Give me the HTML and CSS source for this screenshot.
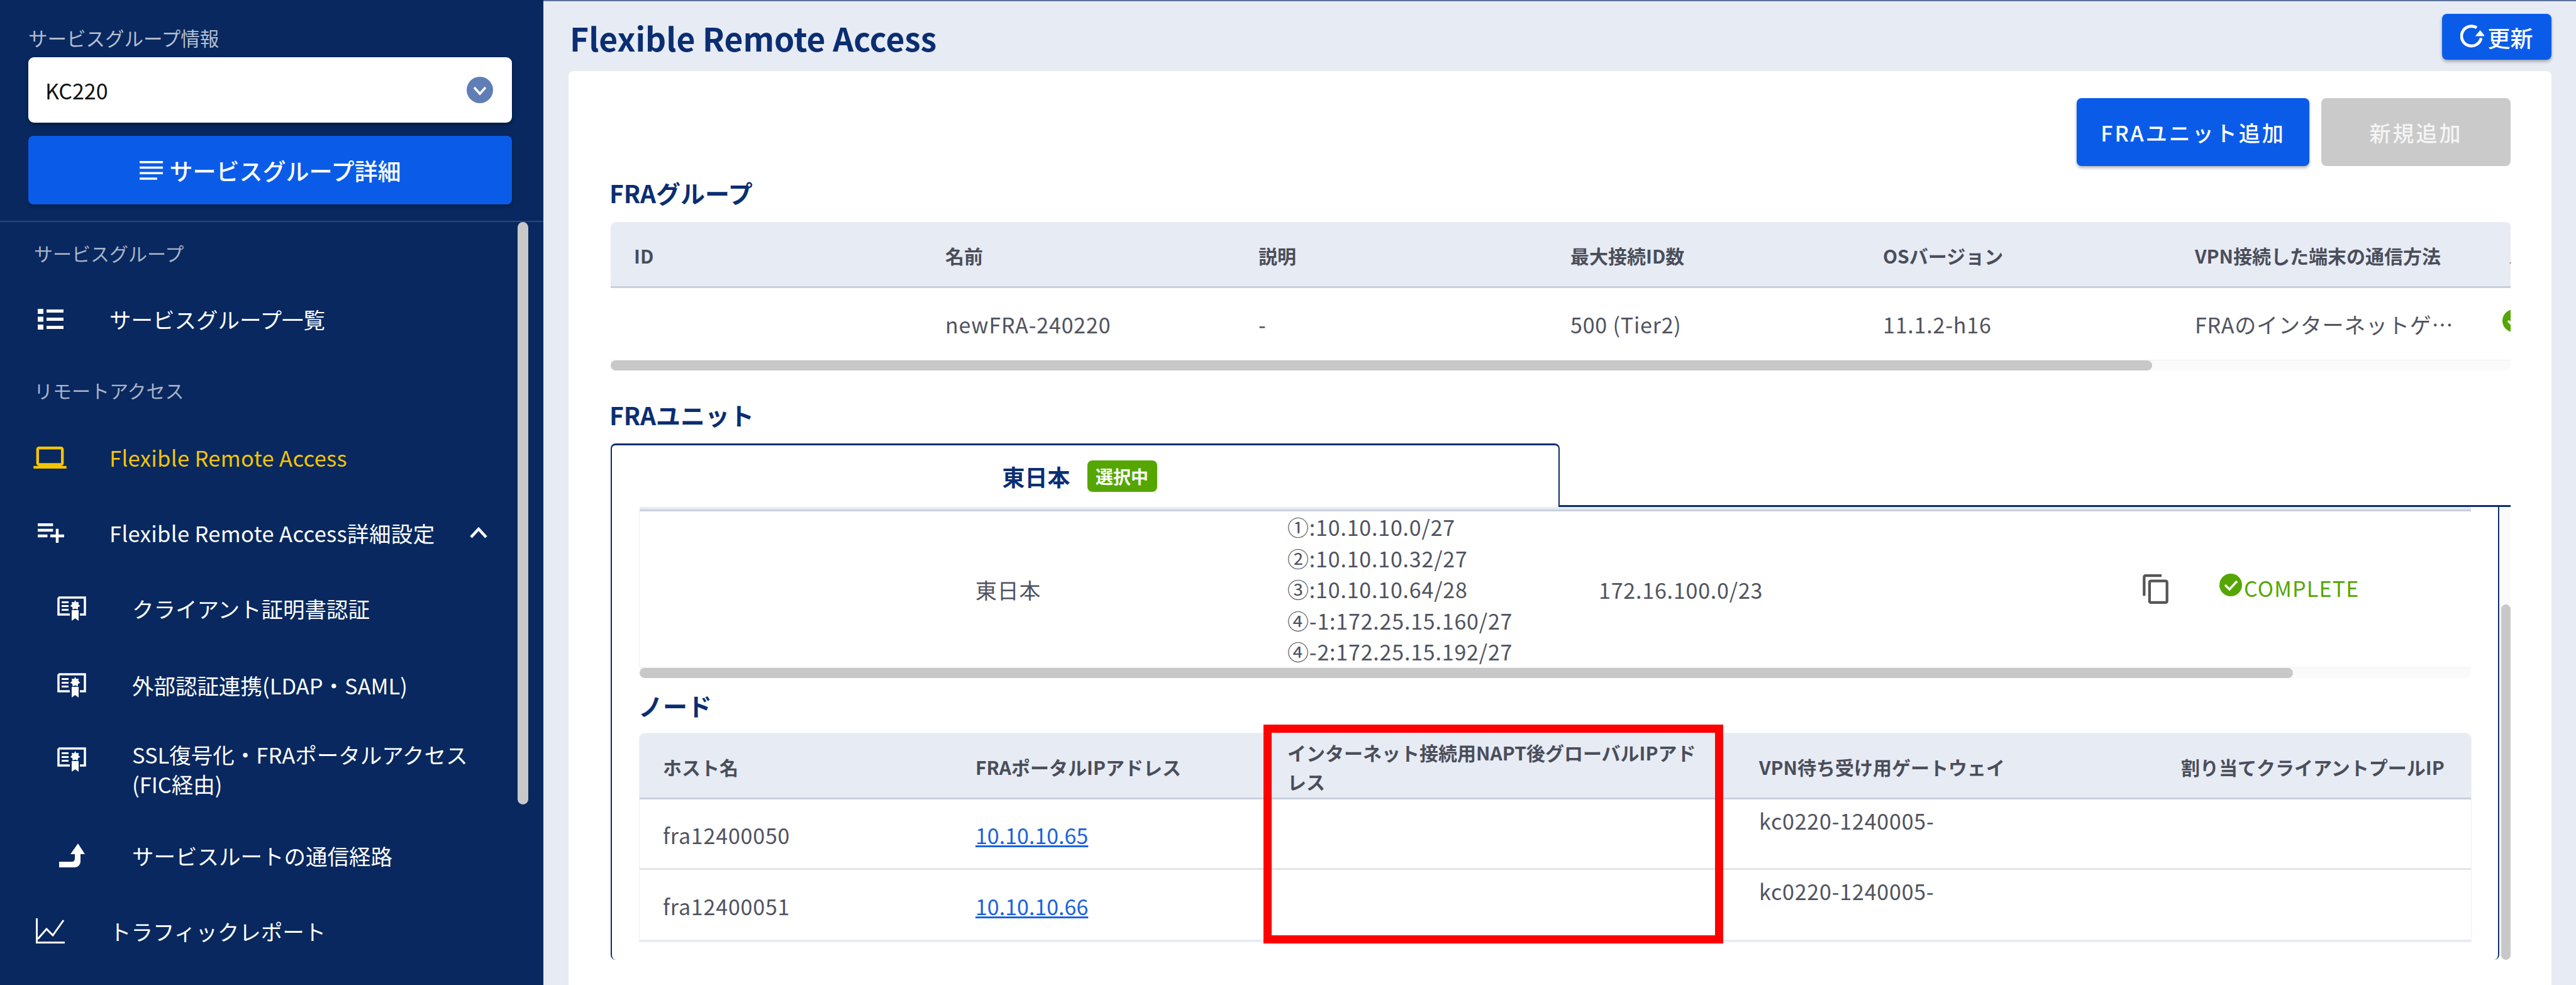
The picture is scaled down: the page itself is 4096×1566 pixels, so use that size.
FILE: index.html
```html
<!DOCTYPE html>
<html lang="ja">
<head>
<meta charset="utf-8">
<title>Flexible Remote Access</title>
<link rel="stylesheet" href="styles.css">
</head>
<body>
<div class="app">
  <aside class="sidebar">
    <div class="sb-head">
      <div class="sb-label">サービスグループ情報</div>
      <div class="select">
        <span>KC220</span>
        <svg class="select-arrow" viewBox="0 0 42 42"><circle cx="21" cy="21" r="21" fill="#5f7eb6"/><path d="M12 17l9 10 9-10" fill="none" stroke="#fff" stroke-width="3.6"/></svg>
      </div>
      <div class="btn btn-wide">
        <svg class="ic-lines" viewBox="0 0 37 30"><path d="M0 0h37v3.5H0zM0 8.7h37v3.5H0zM0 17.4h37v3.5H0zM0 26.2h28v3.5H0z" fill="#fff"/></svg>
        <span>サービスグループ詳細</span>
      </div>
    </div>
    <nav class="nav">
      <div class="nav-thumb"></div>
      <div class="nav-label">サービスグループ</div>
      <div class="nav-item">
        <span class="slot"><svg class="ic-list" viewBox="0 0 41 33"><path d="M0 0h9v8H0zM14 1h27v5H14zM0 12.5h9v8H0zM14 14h27v5H14zM0 25h9v8H0zM14 27h27v5H14z" fill="#fff"/></svg></span>
        <span>サービスグループ一覧</span>
      </div>
      <div class="nav-label nav-label-2">リモートアクセス</div>
      <div class="nav-item nav-active nav-latin">
        <span class="slot"><svg class="ic-laptop" viewBox="0 4 24 16"><path d="M20 18c1.1 0 1.99-.9 1.99-2L22 6c0-1.1-.9-2-2-2H4c-1.100 0-2 .9-2 2v10c0 1.100.9 2 2 2H0v2h24v-2h-4zM4 6h16v10H4V6z" fill="#f5c400"/></svg></span>
        <span>Flexible Remote Access</span>
      </div>
      <div class="nav-item nav-latin">
        <span class="slot"><svg class="ic-add" viewBox="3 6 19 14"><path d="M14 10H3v2h11v-2zm0-4H3v2h11V6zm4 8v-4h-2v4h-4v2h4v4h2v-4h4v-2h-4zM3 16h7v-2H3v2z" fill="#fff"/></svg></span>
        <span>Flexible Remote Access詳細設定</span>
        <svg class="ic-up" viewBox="0 0 28 18"><path d="M2 16L14 3l12 13" fill="none" stroke="#fff" stroke-width="4.500"/></svg>
      </div>
      <div class="nav-item nav-sub">
        <span class="slot"><svg class="ic-cert" viewBox="0 0 46 39"><path d="M2 2h42v27h-8M20 29H2V2" fill="none" stroke="#fff" stroke-width="3.500"/><path d="M7 8h11v3H7zM7 14h11v3H7zM7 20h11v3H7zM23 22h11v17l-5.500-4-5.500 4z" fill="#fff"/><path d="M28.500 6l1.800 3.500 3.900-.6-.6 3.900 3 2.700-3.500 1.800-.6 3.900-3.900-1.800-4 1.800-.5-3.900-3.500-1.800 3-2.700-.6-3.900 3.900.6z" fill="#fff"/></svg></span>
        <span>クライアント証明書認証</span>
      </div>
      <div class="nav-item nav-sub nav-ext">
        <span class="slot"><svg class="ic-cert" viewBox="0 0 46 39"><path d="M2 2h42v27h-8M20 29H2V2" fill="none" stroke="#fff" stroke-width="3.500"/><path d="M7 8h11v3H7zM7 14h11v3H7zM7 20h11v3H7zM23 22h11v17l-5.500-4-5.500 4z" fill="#fff"/><path d="M28.500 6l1.800 3.500 3.900-.6-.6 3.900 3 2.700-3.500 1.800-.6 3.900-3.900-1.800-4 1.800-.5-3.900-3.500-1.800 3-2.700-.6-3.900 3.900.6z" fill="#fff"/></svg></span>
        <span>外部認証連携(LDAP・SAML)</span>
      </div>
      <div class="nav-item nav-sub nav-ssl">
        <span class="slot slot-top"><svg class="ic-cert" viewBox="0 0 46 39"><path d="M2 2h42v27h-8M20 29H2V2" fill="none" stroke="#fff" stroke-width="3.500"/><path d="M7 8h11v3H7zM7 14h11v3H7zM7 20h11v3H7zM23 22h11v17l-5.500-4-5.500 4z" fill="#fff"/><path d="M28.500 6l1.800 3.500 3.900-.6-.6 3.900 3 2.700-3.500 1.800-.6 3.900-3.900-1.800-4 1.800-.5-3.900-3.500-1.800 3-2.700-.6-3.900 3.900.6z" fill="#fff"/></svg></span>
        <span class="ssl-text">SSL復号化・FRAポータルアクセス(FIC経由)</span>
      </div>
      <div class="nav-item nav-sub nav-route">
        <span class="slot"><svg class="ic-route" viewBox="0 0 41 38"><path d="M30 0l11 17h-7v11c0 6-4 10-10 10H0v-9h20c3 0 5-2 5-5V17h-7z" fill="#fff"/></svg></span>
        <span>サービスルートの通信経路</span>
      </div>
      <div class="nav-item">
        <span class="slot"><svg class="ic-chart" viewBox="0 0 46 40"><path d="M1.500 0v38.500H46" fill="none" stroke="#fff" stroke-width="3"/><path d="M3 33l14-16 10 10L44 3" fill="none" stroke="#fff" stroke-width="3"/></svg></span>
        <span>トラフィックレポート</span>
      </div>
    </nav>
  </aside>

  <main class="main">
    <header class="topbar">
      <h1 class="title">Flexible Remote Access</h1>
      <div class="btn btn-refresh">
        <svg class="ic-refresh" viewBox="0 0 24 28"><path d="M16.500 4.500A10 10 0 1 0 21 15" fill="none" stroke="#fff" stroke-width="3"/><path d="M16 15h10l-5-6z" fill="#fff" transform="translate(-1 -2)"/></svg>
        <span>更新</span>
      </div>
    </header>

    <section class="card">
      <div class="actions">
        <div class="btn btn-add">FRAユニット追加</div>
        <div class="btn btn-disabled">新規追加</div>
      </div>

      <h2 class="heading head-group">FRAグループ</h2>
      <div class="table table-group">
        <div class="row row-head cols-group">
          <div class="cell">ID</div>
          <div class="cell">名前</div>
          <div class="cell">説明</div>
          <div class="cell">最大接続ID数</div>
          <div class="cell">OSバージョン</div>
          <div class="cell">VPN接続した端末の通信方法</div>
          <div class="cell">ステータス</div>
        </div>
        <div class="row row-group cols-group">
          <div class="cell"></div>
          <div class="cell">newFRA-240220</div>
          <div class="cell">-</div>
          <div class="cell">500 (Tier2)</div>
          <div class="cell">11.1.2-h16</div>
          <div class="cell">FRAのインターネットゲ…</div>
          <div class="cell cell-status-top"><svg class="ic-check" viewBox="0 0 36 36"><circle cx="18" cy="18" r="18" fill="#55a600"/><path d="M9 18l7 7 12-13" fill="none" stroke="#fff" stroke-width="3.500"/></svg></div>
        </div>
      </div>
      <div class="hscroll hscroll-group"><div class="hthumb hthumb-group"></div></div>

      <h2 class="heading head-unit">FRAユニット</h2>
      <div class="tabs">
        <div class="tab">
          <span class="tab-name">東日本</span>
          <span class="badge">選択中</span>
        </div>
        <div class="tab-rest"></div>
      </div>
      <div class="unit-body">
        <div class="panel">
          <div class="strip"></div>
          <div class="row row-unit cols-unit">
            <div class="cell"></div>
            <div class="cell">東日本</div>
            <div class="cell cell-lines">①:10.10.10.0/27<br>②:10.10.10.32/27<br>③:10.10.10.64/28<br>④-1:172.25.15.160/27<br>④-2:172.25.15.192/27</div>
            <div class="cell">172.16.100.0/23</div>
            <div class="cell"><svg class="ic-copy" viewBox="2 1 19 22"><path d="M16 1H4c-1.100 0-2 .9-2 2v14h2V3h12V1zm3 4H8c-1.100 0-2 .9-2 2v14c0 1.100.9 2 2 2h11c1.100 0 2-.9 2-2V7c0-1.100-.9-2-2-2zm0 16H8V7h11v14z" fill="#555"/></svg></div>
            <div class="cell cell-complete"><svg class="ic-check" viewBox="0 0 36 36"><circle cx="18" cy="18" r="18" fill="#55a600"/><path d="M9 18l7 7 12-13" fill="none" stroke="#fff" stroke-width="3.500"/></svg><span>COMPLETE</span></div>
          </div>
          <div class="hscroll hscroll-unit"><div class="hthumb hthumb-unit"></div></div>

          <h3 class="heading head-node">ノード</h3>
          <div class="table table-node">
            <div class="row row-head cols-node">
              <div class="cell">ホスト名</div>
              <div class="cell">FRAポータルIPアドレス</div>
              <div class="cell cell-wrap">インターネット接続用NAPT後グローバルIPアドレス</div>
              <div class="cell">VPN待ち受け用ゲートウェイ</div>
              <div class="cell">割り当てクライアントプールIP</div>
            </div>
            <div class="row row-node cols-node">
              <div class="cell">fra12400050</div>
              <div class="cell"><a class="link" href="#">10.10.10.65</a></div>
              <div class="cell"></div>
              <div class="cell cell-topline">kc0220-1240005-</div>
              <div class="cell"></div>
            </div>
            <div class="row row-node row-node-last cols-node">
              <div class="cell">fra12400051</div>
              <div class="cell"><a class="link" href="#">10.10.10.66</a></div>
              <div class="cell"></div>
              <div class="cell cell-topline">kc0220-1240005-</div>
              <div class="cell"></div>
            </div>
          </div>
          <div class="redbox"></div>
        </div>
        <div class="vscroll"><div class="vtrack"></div><div class="vthumb"></div></div>
      </div>
    </section>
  </main>
</div>
</body>
</html>
```

FILE: styles.css
```css
* { box-sizing: border-box; }
html, body { margin: 0; padding: 0; height: 100%; overflow: hidden; }
body {
  font-family: "Noto Sans CJK JP", "Noto Sans", sans-serif;
  font-size: 34px;
  color: #50535f;
  background: #e7ebf4;
}
.app { display: flex; width: 4096px; height: 1566px; }

/* sidebar */
.sidebar { width: 864px; flex: none; background: #08285f; color: #fff; display: flex; flex-direction: column; }
.sb-head { padding: 40px 50px 26px 45px; border-bottom: 2px solid #2b4775; }
.sb-label { height: 40px; line-height: 40px; font-size: 30.500px; color: #b4bed0; }
.select {
  margin-top: 11px; height: 104px; background: #fff; border-radius: 9px; color: #111;
  display: flex; align-items: center; justify-content: space-between; padding: 0 30px 0 27px;
  box-shadow: 0 3px 6px rgba(0,0,0,.35);
}
.select-arrow { width: 42px; height: 42px; }
.btn {
  display: flex; align-items: center; justify-content: center; background: #0a5ce8; color: #fff;
  border-radius: 8px; box-shadow: 0 3px 5px rgba(0,0,0,.3); font-weight: 500;
}
.btn-wide { margin-top: 21px; height: 109px; font-size: 37px; gap: 11px; }
.ic-lines { width: 37px; height: 30px; }

.nav { position: relative; flex: 1; padding-top: 24px; }
.nav-thumb { position: absolute; top: 0; right: 24px; width: 17px; height: 926px; background: #c8c8c8; border-radius: 9px; }
.nav-label { height: 50px; line-height: 50px; padding-left: 54px; font-size: 30px; color: #a8b3c8; }
.nav-label-2 { margin-top: 28px; margin-bottom: 22px; }
.nav-item { display: flex; align-items: center; height: 120px; padding-left: 53px; font-size: 34.500px; color: #fff; }
.nav-label + .nav-item { margin-top: 20px; }
.nav-label-2 + .nav-item { margin-top: 0; }
.nav-latin { letter-spacing: .35px; }
.slot { width: 121px; flex: none; display: flex; }
.nav-sub { padding-left: 91px; }
.nav-sub .slot { width: 119px; }
.nav-active { color: #f5c400; }
.nav-ext { margin-top: 2px; }
.nav-ssl { height: 147px; }
.nav-route { height: 124px; padding-top: 4px; }
.slot-top { margin-bottom: 31px; }
.ssl-text { width: 570px; line-height: 47px; }
.ic-list { width: 41px; height: 33px; margin-left: 7px; }
.ic-laptop { width: 53px; height: 35px; }
.ic-add { width: 42px; height: 31px; margin-left: 7px; }
.ic-up { width: 28px; height: 18px; margin-left: 55px; }
.ic-cert { width: 46px; height: 39px; }
.ic-route { width: 41px; height: 38px; margin-left: 3px; }
.ic-chart { width: 46px; height: 40px; margin-left: 4px; }

/* main */
.main { flex: 1; min-width: 0; display: flex; flex-direction: column; padding: 0 39px 0 40px; border-top: 2px solid #5b7198; }
.topbar { height: 111px; display: flex; justify-content: space-between; align-items: flex-start; flex: none; }
.title { margin: 18px 0 0 2px; font-size: 51.500px; line-height: 80px; font-weight: 700; color: #0b2e72; }
.btn-refresh { margin-top: 20px; width: 174px; height: 73px; font-size: 36px; gap: 5px; }
.ic-refresh { width: 38px; height: 44px; }

.card { flex: 1; background: #fff; border-radius: 8px 8px 0 0; padding: 43px 65px 0 67px; min-height: 0; }
.actions { display: flex; justify-content: flex-end; gap: 19px; }
.btn-add { width: 370px; height: 108px; font-size: 34px; letter-spacing: 3px; }
.btn-disabled { width: 301px; height: 108px; font-size: 34px; letter-spacing: 3px; background: #cacaca; color: #f4f4f4; box-shadow: none; }

.heading { margin: 0 0 0 -2px; height: 50px; line-height: 50px; font-size: 39px; font-weight: 700; color: #0b2e72; }
.head-group { margin-top: 17px; }
.head-unit { margin-top: 45px; }
.head-node { margin-top: 18px; }

.table { overflow: hidden; }
.table-group { margin-top: 22px; border-radius: 8px 8px 0 0; }
.table-node { margin-top: 20px; border-radius: 8px 8px 0 0; box-shadow: 0 0 0 1px #eef0f6; }
.row { display: grid; align-items: center; }
.cell { padding-left: 37px; white-space: nowrap; letter-spacing: .8px; }
.row-head { height: 105px; padding-top: 3px; background: #e7ebf4; border-bottom: 3px solid #c9cfdc; font-size: 30px; font-weight: 700; color: #4a4e5a; }
.row-head .cell { letter-spacing: 0; }
.cols-group { grid-template-columns: 495px 498px 496px 497px 496px 498px 498px; }
.cols-unit { grid-template-columns: 497px 496px 495px 867px 122px 1fr; }
.cols-node { grid-template-columns: 497px 496px 750px 671px 1fr; }
.row-group { height: 114px; }
.cell-status-top { display: flex; padding-left: 28px; }

.hscroll { height: 17px; background: #fafafa; border-top: 1px solid #eef0f6; border-radius: 0 0 9px 9px; }
.hthumb { height: 100%; background: #c8c8c8; border-radius: 9px; }
.hthumb-group { width: 2451px; }
.hthumb-unit { width: 2629px; }

.tabs { margin-top: 21px; display: flex; height: 101px; }
.tab {
  width: 1509px; border: 2px solid #0b2e72; border-top-width: 3px; border-bottom: none; border-radius: 8px 8px 0 0;
  display: flex; align-items: center; justify-content: center; gap: 27px; padding-right: 18px; background: #fff;
}
.tab-rest { flex: 1; border-bottom: 3px solid #0b2e72; }
.tab-name { font-size: 36px; font-weight: 700; color: #0b2e72; }
.badge { width: 111px; height: 50px; background: #55a600; color: #fff; border-radius: 8px; font-size: 28px; font-weight: 700; line-height: 50px; text-align: center; }

.unit-body { display: flex; height: 720px; align-items: stretch; }
.panel { position: relative; flex: 1; min-width: 0; padding: 0 43px 0 44px; border-left: 2px solid #0b2e72; border-right: 2px solid #0b2e72; border-radius: 0 0 8px 8px; }
.strip { height: 7px; background: #e7ebf4; border-bottom: 3px solid #c9cfdc; }
.row-unit { height: 248px; box-shadow: -1px 0 0 #eef0f6; }
.cell-lines { line-height: 49.500px; }
.ic-copy { width: 41px; height: 47px; display: block; margin-top: -2px; margin-left: -2px; }
.cell-complete { display: flex; align-items: center; gap: 3px; padding-left: 35px; padding-bottom: 5px; color: #55a600; letter-spacing: 1.200px; }
.ic-check { width: 36px; height: 36px; flex: none; margin-top: -10px; }
.hscroll-unit { border-radius: 0 0 9px 9px; }

.row-node { height: 112px; padding-top: 3px; border-bottom: 3px solid #e4e4e4; background: #fff; }
.row-node-last { height: 114px; border-bottom: 3px solid #e7ebf4; }
.cell-wrap { white-space: normal; line-height: 46px; width: 700px; }
.link { color: #1a62e0; text-decoration: underline; }
.row-node .cell:nth-child(2) { letter-spacing: 0; }
.cell-topline { align-self: start; line-height: 49px; padding-top: 6px; }
.redbox { position: absolute; left: 1036px; top: 346px; width: 731px; height: 348px; border: 13px solid #f00; }

.vscroll { width: 15px; margin-left: 3px; display: flex; flex-direction: column; }
.vtrack { height: 155px; background: #fafafa; }
.vthumb { flex: 1; background: #c8c8c8; border-radius: 9px; }
```
